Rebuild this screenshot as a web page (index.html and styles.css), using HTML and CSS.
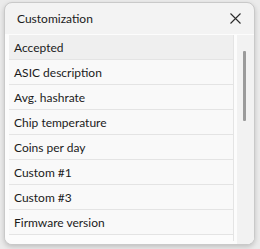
FILE: index.html
```html
<!DOCTYPE html>
<html>
<head>
    <title>Customization</title>
    <link rel="stylesheet" href="styles.css">
</head>
<body>
    <div class="dialog">
        <div class="dialog-head">
            <span class="dialog-title">Customization</span>
            <span class="close">
                <svg width="11" height="11" viewBox="0 0 11 11">
                    <path d="M0.5 0.5 L10.5 10.5 M10.5 0.5 L0.5 10.5" stroke="#2b2b2b" stroke-width="1.1" fill="none"/>
                </svg>
            </span>
        </div>
        <div class="dialog-body">
            <div class="list">
                <div class="row selected">Accepted</div>
                <div class="row">ASIC description</div>
                <div class="row">Avg. hashrate</div>
                <div class="row">Chip temperature</div>
                <div class="row">Coins per day</div>
                <div class="row">Custom #1</div>
                <div class="row">Custom #3</div>
                <div class="row">Firmware version</div>
            </div>
            <div class="scrollbar">
                <div class="thumb"></div>
            </div>
        </div>
    </div>
</body>
</html>
```

FILE: styles.css
```css
html, body {
    margin: 0;
    height: 100%;
}
body {
    background: #ebebeb;
    padding: 2px 0 0 4px;
    box-sizing: border-box;
    font-family: Lato, "Noto Sans", sans-serif;
    color: #1b1b1b;
}
.dialog {
    width: 251px;
    height: 243px;
    box-sizing: border-box;
    border: 1px solid #c9c9c9;
    border-radius: 8px;
    background: #f3f3f3;
    box-shadow: 0 2px 5px rgba(0, 0, 0, 0.18);
    display: flex;
    flex-direction: column;
    overflow: hidden;
}
.dialog-head {
    height: 31px;
    display: flex;
    align-items: center;
    justify-content: space-between;
    padding: 0 13px 0 12px;
    flex: none;
}
.dialog-title {
    font-size: 12px;
    margin-bottom: 1px;
}
.close {
    display: flex;
}
.dialog-body {
    flex: 1;
    display: flex;
    background: #fcfcfc;
    padding: 1px 0 0 4px;
    min-height: 0;
}
.list {
    width: 224px;
    flex: none;
    border-right: 1px solid #e4e4e4;
    height: 206px;
    overflow: hidden;
}
.row {
    height: 24px;
    line-height: 25px;
    border-bottom: 1px solid #e4e4e4;
    background: #f9f9f9;
    padding-left: 5px;
    font-size: 12px;
    white-space: nowrap;
}
.row.selected {
    background: #efefef;
}
.scrollbar {
    flex: none;
    width: 18px;
    margin-left: 3px;
    background: #f2f2f2;
    position: relative;
}
.thumb {
    position: absolute;
    left: 6px;
    top: 16px;
    width: 3px;
    height: 70px;
    border-radius: 1px;
    background: #9b9b9b;
}
```
